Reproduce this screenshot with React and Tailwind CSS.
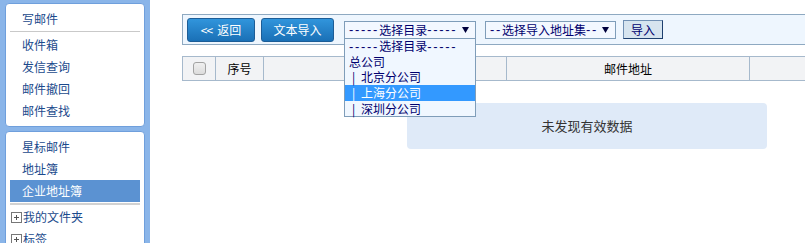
import React from 'react'

const font = { fontFamily: '"Noto Sans CJK SC", "Liberation Sans", sans-serif' }

function NavItem({ label, active }) {
  return (
    <div
      className={
        'mx-[4px] h-[22px] pl-[12px] flex items-center text-[12px] leading-none ' +
        (active ? 'bg-[#5b92d2] text-white' : 'text-[#1b4a8c]')
      }
    >
      {label}
    </div>
  )
}

function TreeItem({ label }) {
  return (
    <div className="mx-[4px] h-[22px] pl-[1px] flex items-center text-[12px] leading-none text-[#1b4a8c]">
      <span className="w-[11px] h-[11px] mr-[1px] border border-[#777] flex items-center justify-center">
        <svg viewBox="0 0 9 9" className="w-[9px] h-[9px]">
          <path d="M2 4.5h5M4.5 2v5" stroke="#555" strokeWidth="1" />
        </svg>
      </span>
      {label}
    </div>
  )
}

function Sidebar() {
  return (
    <div className="w-[150px] shrink-0 h-full bg-[#8ab5e9] px-[5px] pt-[3px] flex flex-col gap-[4px]">
      <div className="bg-white border border-[#6f9fdc] rounded-[4px] pt-[4px] pb-[4px]">
        <NavItem label="写邮件" />
        <div className="mx-[4px] mt-[1px] mb-[2px] h-[1px] bg-[#c9c9c9]" />
        <NavItem label="收件箱" />
        <NavItem label="发信查询" />
        <NavItem label="邮件撤回" />
        <NavItem label="邮件查找" />
      </div>
      <div className="flex-1 bg-white border border-[#6f9fdc] rounded-t-[4px] pt-[4px]">
        <NavItem label="星标邮件" />
        <NavItem label="地址簿" />
        <NavItem label="企业地址簿" active />
        <div className="mx-[4px] mt-[1px] mb-[1px] h-[2px] bg-[#d2d2d2]" />
        <TreeItem label="我的文件夹" />
        <TreeItem label="标签" />
      </div>
    </div>
  )
}

function BlueButton({ children, w }) {
  return (
    <button
      className={
        'h-[24px] rounded-[3px] border border-[#1c5d97] bg-gradient-to-b from-[#3195dc] to-[#1a70b6] text-white text-[12px] leading-none flex items-center justify-center ' +
        w
      }
    >
      {children}
    </button>
  )
}

function Dashes({ n }) {
  return (
    <span className="text-[13px] tracking-[1.7px]" style={{ fontFamily: '"Liberation Sans", sans-serif' }}>
      {'-'.repeat(n)}
    </span>
  )
}

function Arrow() {
  return (
    <svg viewBox="0 0 7 6" className="w-[7px] h-[6px]">
      <path d="M0 0h7L3.5 6z" fill="#00003c" />
    </svg>
  )
}

function Select({ children, w }) {
  return (
    <div
      className={
        'h-[18px] border border-[#7f9db9] bg-[#f3f8ff] flex items-center pl-[4px] pr-[6px] text-[12px] leading-none text-[#00006e] ' +
        w
      }
    >
      <span className="flex-1 whitespace-nowrap flex items-center">{children}</span>
      <Arrow />
    </div>
  )
}

const branches = ['北京分公司', '上海分公司', '深圳分公司']

function Option({ children, active }) {
  return (
    <div
      className={
        'h-[15.6px] pl-[4px] flex items-center text-[12px] leading-none whitespace-nowrap ' +
        (active ? 'bg-[#3399ff] text-white' : 'text-[#00006e]')
      }
    >
      {children}
    </div>
  )
}

export default function App() {
  return (
    <div className="w-[805px] h-[243px] bg-white flex overflow-hidden" style={font}>
      <Sidebar />
      <div className="flex-1 min-w-0 pl-[32px] pt-[14px] overflow-hidden">
        <div className="w-[700px]">
          <div className="h-[31px] border border-[#8ea9c1] bg-[#eef6fe] flex items-center pl-[4px]">
            <BlueButton w="w-[68px]">
              <span className="mr-[5px] text-[12px] tracking-[-1px]">&lt;&lt;</span>返回
            </BlueButton>
            <div className="ml-[6px]">
              <BlueButton w="w-[73px]">文本导入</BlueButton>
            </div>
            <div className="ml-[10px] relative">
              <Select w="w-[132px]">
                <Dashes n={5} />选择目录<Dashes n={5} />
              </Select>
              <div className="absolute left-0 top-[17px] w-[132px] border border-[#7f9db9] bg-[#f0f7ff] z-10">
                <Option>
                  <Dashes n={5} />选择目录<Dashes n={5} />
                </Option>
                <Option>总公司</Option>
                {branches.map((b, i) => (
                  <Option key={b} active={i === 1}>
                    <span className="w-[9px] text-center">|</span>
                    <span className="ml-[3px]">{b}</span>
                  </Option>
                ))}
              </div>
            </div>
            <div className="ml-[9px]">
              <Select w="w-[131px]">
                <Dashes n={2} />选择导入地址集<Dashes n={2} />
              </Select>
            </div>
            <button className="ml-[7px] w-[40px] h-[19px] bg-[#d6e4ef] border border-t-[#6f8fb3] border-l-[#6f8fb3] border-r-[#1d3f6e] border-b-[#1d3f6e] text-[12px] leading-none text-[#00006e] flex items-center justify-center">
              导入
            </button>
          </div>

          <div className="mt-[11px] h-[25px] border border-[#a6b9cc] bg-[#f2f3f5] flex text-[12px] text-black leading-none">
            <div className="w-[33px] border-r border-[#a6b9cc] flex items-center justify-center">
              <span className="w-[13px] h-[13px] rounded-[3px] border border-[#a3a3a3] bg-gradient-to-b from-[#f0f0f0] to-[#dcdcdc]" />
            </div>
            <div className="w-[48px] border-r border-[#a6b9cc] flex items-center justify-center">序号</div>
            <div className="w-[243px] border-r border-[#a6b9cc]" />
            <div className="w-[243px] border-r border-[#a6b9cc] flex items-center justify-center">邮件地址</div>
            <div className="flex-1" />
          </div>

          <div className="mt-[22px] ml-[225px] w-[360px] h-[46px] rounded-[4px] bg-[#dfeaf8] flex items-center justify-center text-[13px] text-[#333]">
            未发现有效数据
          </div>
        </div>
      </div>
    </div>
  )
}
